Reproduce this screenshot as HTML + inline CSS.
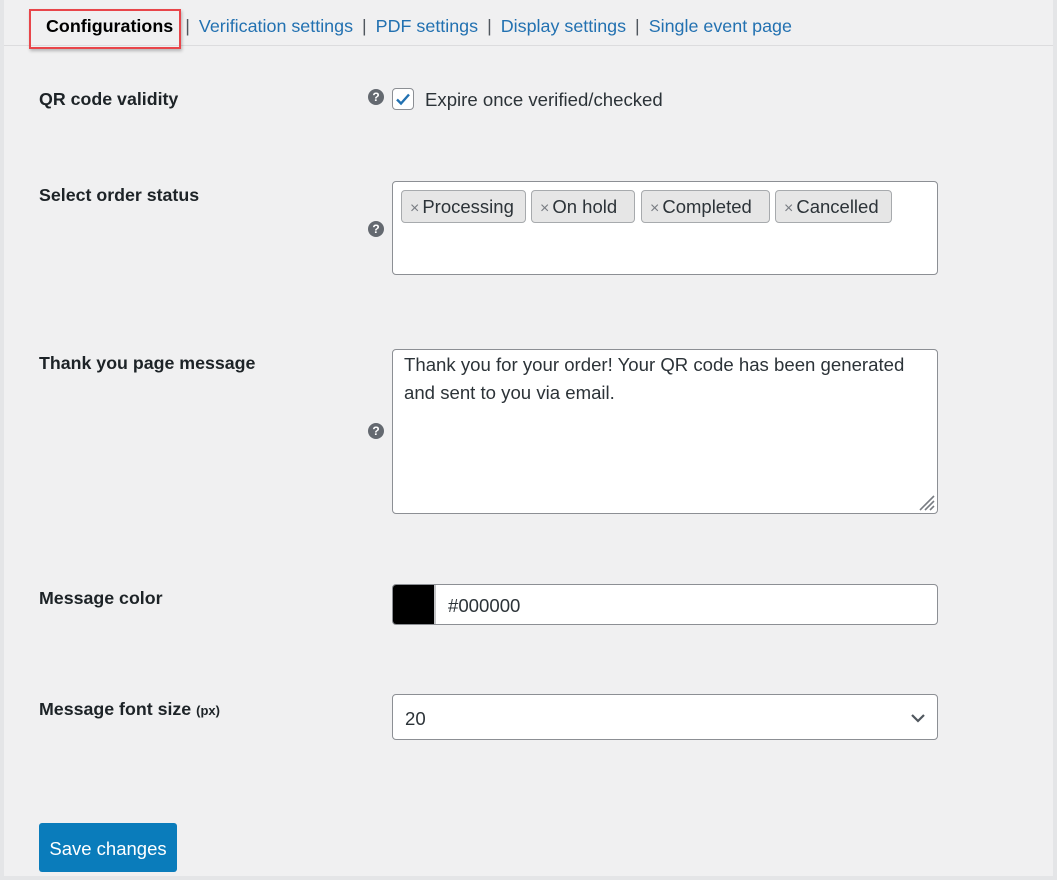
<!DOCTYPE html>
<html><head><meta charset="utf-8"><style>
*{box-sizing:border-box;margin:0;padding:0}
html,body{width:1057px;height:880px;overflow:hidden}
body{background:#e4e5e7;font-family:"Liberation Sans",sans-serif;color:#1d2327;position:relative}
.main{position:absolute;left:4px;top:0;width:1049px;height:876px;background:#f0f0f1}
.a{position:absolute}
.tabs{left:46px;top:16px;font-size:17.9px;color:#2271b1;white-space:nowrap}
.tabs span.sep{color:#50575e;margin:0 9px}
.tabbox{left:29px;top:9px;width:152px;height:40px;border:2px solid #e8454a;box-shadow:1px 2px 3px rgba(0,0,0,.25)}
.hr{left:4px;top:45px;width:1049px;height:1px;background:#dcdcde}
.lbl{font-weight:bold;font-size:17.8px;color:#1d2327;left:39px}
.help{width:16px;height:16px;border-radius:50%;background:#646970;color:#fff;font-size:12px;font-weight:bold;text-align:center;line-height:16px;left:368px}
.box{background:#fff;border:1px solid #8c8f94;border-radius:4px}
.chip{position:absolute;top:8px;height:33px;background:#e6e6e6;border:1px solid #a7aaad;border-radius:4px;font-size:18.5px;line-height:31px;padding:0 0 0 8px;color:#2c3338;white-space:nowrap}
.chip b{font-weight:normal;color:#787c82;font-size:16px;margin-right:3px}
.txt{font-size:18.6px;color:#2c3338}
</style></head><body>
<div class="main"></div>
<div class="a hr"></div>
<div class="a tabbox"></div>
<div class="a tabs"><b style="color:#000">Configurations</b><span class="sep" style="margin-left:12px">|</span>Verification settings<span class="sep">|</span>PDF settings<span class="sep">|</span>Display settings<span class="sep">|</span>Single event page</div>

<div class="a lbl" style="top:89px">QR code validity</div>
<div class="a help" style="top:89px">?</div>
<div class="a" style="left:392px;top:88px;width:22px;height:22px;background:#fff;border:1px solid #8c8f94;border-radius:4px">
<svg width="20" height="20" viewBox="0 0 20 20" style="position:absolute;left:0;top:0"><path d="M4 10.5l4 4 8-9" fill="none" stroke="#2271b1" stroke-width="2.4"/></svg></div>
<div class="a txt" style="left:425px;top:89px">Expire once verified/checked</div>

<div class="a lbl" style="top:185px">Select order status</div>
<div class="a help" style="top:221px">?</div>
<div class="a box" style="left:392px;top:181px;width:546px;height:94px">
<div class="chip" style="left:8px;width:125px"><b>×</b>Processing</div>
<div class="chip" style="left:138px;width:104px"><b>×</b>On hold</div>
<div class="chip" style="left:248px;width:129px"><b>×</b>Completed</div>
<div class="chip" style="left:382px;width:117px"><b>×</b>Cancelled</div>
</div>

<div class="a lbl" style="top:353px">Thank you page message</div>
<div class="a help" style="top:423px">?</div>
<div class="a box" style="left:392px;top:349px;width:546px;height:165px">
<div class="txt" style="position:absolute;left:11px;top:1px;line-height:28px;width:515px">Thank you for your order! Your QR code has been generated and sent to you via email.</div>
<svg width="24" height="24" style="position:absolute;right:1px;bottom:1px"><path d="M22 8L8 22M22 13L13 22M22 18L18 22" stroke="#787c82" stroke-width="1.6"/></svg>
</div>

<div class="a lbl" style="top:588px">Message color</div>
<div class="a box" style="left:392px;top:584px;width:546px;height:41px;overflow:hidden">
<div style="position:absolute;left:0;top:0;width:43px;height:41px;background:#000;border-right:2px solid #c3c4c7"></div>
<div class="txt" style="position:absolute;left:55px;top:10px">#000000</div>
</div>

<div class="a lbl" style="top:699px">Message font size <span style="font-size:13px">(px)</span></div>
<div class="a box" style="left:392px;top:694px;width:546px;height:46px">
<div class="txt" style="position:absolute;left:12px;top:13px">20</div>
<svg width="16" height="10" style="position:absolute;right:11px;top:18px"><path d="M2 2l6 6 6-6" fill="none" stroke="#50575e" stroke-width="2.2"/></svg>
</div>

<div class="a" style="left:39px;top:823px;width:138px;height:49px;background:#0a7cbb;border-radius:3px;color:#fff;font-size:18.5px;text-align:center;line-height:51px">Save changes</div>
</body></html>
